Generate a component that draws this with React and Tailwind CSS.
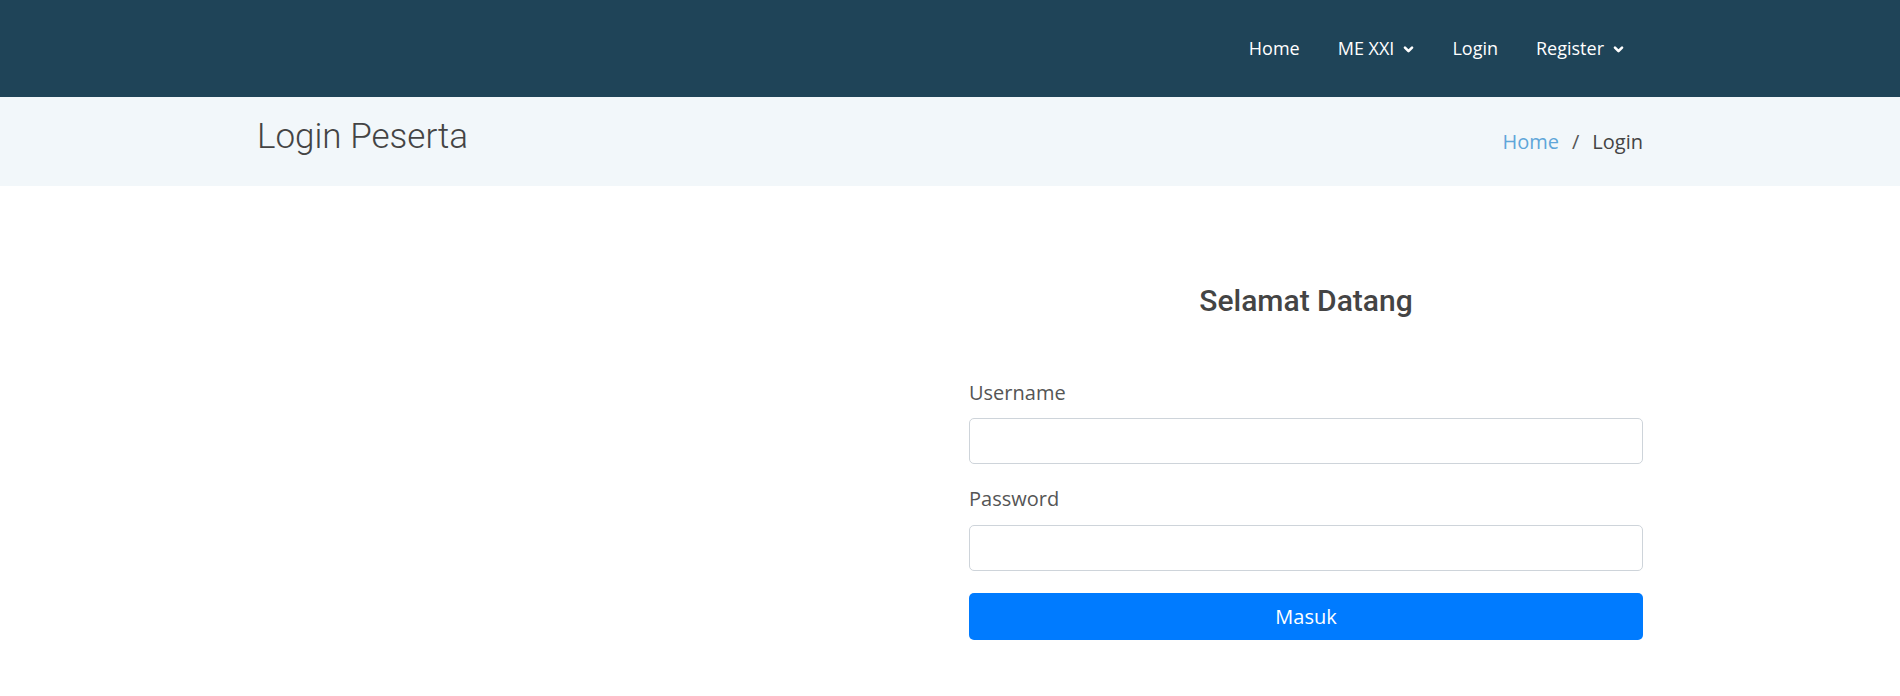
import React from 'react';

// ─── Navigation ──────────────────────────────────────────────────────────────
const NAV = [
  { label: 'Home' },
  { label: 'ME XXI', caret: true },
  { label: 'Login' },
  { label: 'Register', caret: true },
];

function Caret() {
  return (
    <svg viewBox="0 0 10 10" className="w-[11px] h-[11px] ml-[9px] mt-[2px]" fill="none" stroke="currentColor" strokeWidth="2.4" strokeLinecap="round" strokeLinejoin="round">
      <path d="M1.8 3.3 L5 6.5 L8.2 3.3" />
    </svg>
  );
}

function Navbar() {
  return (
    <header className="h-[97px] bg-[#1f4458]">
      <div className="w-[1416px] mx-auto px-[15px] h-full flex items-center justify-end">
        <ul className="flex items-center pb-[1px]">
          {NAV.map(({ label, caret }) => (
            <li key={label}>
              <a href="#" className="flex items-center px-[19px] text-[18px] leading-[24px] text-white">
                {label}
                {caret && <Caret />}
              </a>
            </li>
          ))}
        </ul>
      </div>
    </header>
  );
}

// ─── Bandeau titre + fil d'ariane ───────────────────────────────────────────
function PageHeader() {
  return (
    <section className="h-[89px] bg-[#f2f7fa]">
      <div className="w-[1416px] mx-auto px-[15px] h-full flex items-center justify-between">
        <h1 className="font-['Roboto',sans-serif] font-light text-[35px] leading-[40px] text-[#444] mb-[10px]">Login Peserta</h1>
        <nav className="flex items-center text-[20px] leading-[26px]">
          <a href="#" className="text-[#5fa6d9]">Home</a>
          <span className="px-[13px] text-[#555]">/</span>
          <span className="text-[#444]">Login</span>
        </nav>
      </div>
    </section>
  );
}

// ─── Formulaire ──────────────────────────────────────────────────────────────
function LoginForm() {
  return (
    <div className="flex flex-col">
      <h2 className="text-center font-['Roboto',sans-serif] font-medium text-[30px] leading-[36px] text-[#444]">Selamat Datang</h2>
      <form className="mt-[62px] flex flex-col" onSubmit={e => e.preventDefault()}>
        <label className="text-[20px] leading-[24px] text-[#555] mb-[13px]">Username</label>
        <input type="text" className="h-[46px] border border-[#ced4da] rounded-[5px] bg-white px-3 outline-none" />
        <label className="text-[20px] leading-[24px] text-[#555] mt-[23px] mb-[14px]">Password</label>
        <input type="password" className="h-[46px] border border-[#ced4da] rounded-[5px] bg-white px-3 outline-none" />
        <button type="submit" className="mt-[22px] h-[47px] rounded-[5px] bg-[#007bff] text-white text-[20px]">Masuk</button>
      </form>
    </div>
  );
}

export default function App() {
  return (
    <div className="min-h-screen bg-white font-['Open_Sans',sans-serif]">
      <Navbar />
      <PageHeader />
      <main className="w-[1416px] mx-auto px-[15px] pt-[97px] pb-16">
        <div className="grid grid-cols-2 gap-[38px]">
          <div />
          <LoginForm />
        </div>
      </main>
    </div>
  );
}
